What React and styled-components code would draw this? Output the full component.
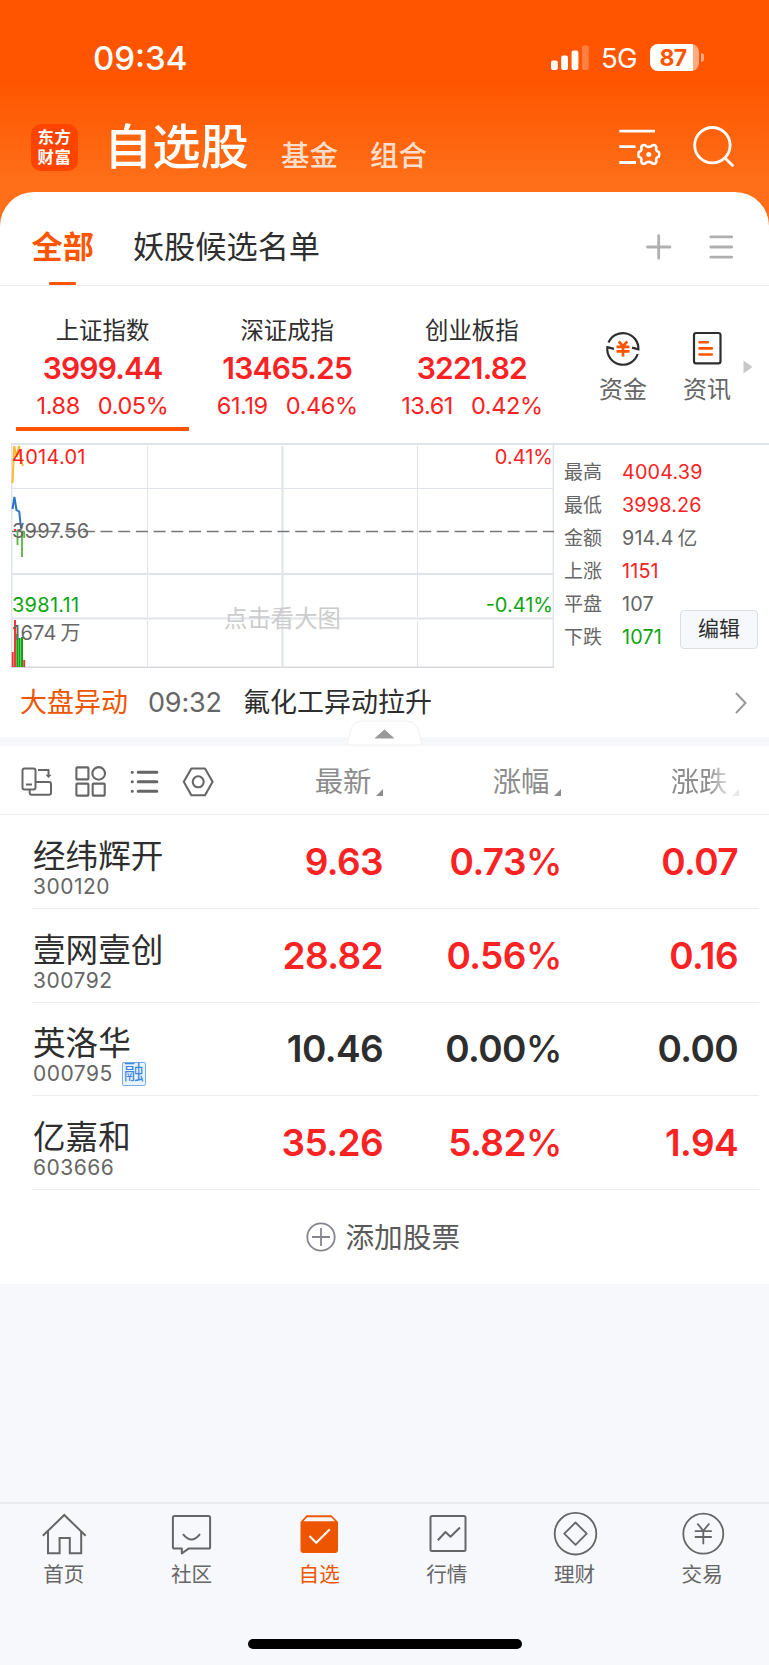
import React, { useState } from "react";
import styled, { createGlobalStyle, css } from "styled-components";

const colors = {
  brand: "#ff5500",
  tab: "#ee5500",
  up: "#fa2222",
  down: "#10a510",
  text: "#2e2e2e",
  sub: "#666666",
  muted: "#8c8c8c",
  line: "#ececee",
  chartLine: "#dfe3ec",
  bg: "#f7f8fb",
};

const GlobalStyle = createGlobalStyle`
  * {
    box-sizing: border-box;
  }
  body {
    margin: 0;
    background: ${colors.bg};
    font-family: Inter, "Noto Sans CJK SC", sans-serif;
    color: ${colors.text};
  }
  button {
    font: inherit;
    color: inherit;
    background: none;
    border: 0;
    padding: 0;
  }
  svg {
    display: block;
    flex: none;
    overflow: visible;
  }
`;

const Screen = styled.div`
  display: flex;
  flex-direction: column;
  width: 769px;
  height: 1665px;
  overflow: hidden;
  white-space: nowrap;
`;

/* ---------- header ---------- */

const Header = styled.header`
  flex: none;
  height: 230px;
  background: linear-gradient(#ff5500 0, #ff5500 82px, #ff6e18 180px);
  color: #fff;
`;

const StatusBar = styled.div`
  display: flex;
  align-items: center;
  height: 115px;
  padding: 0 65px 0 93px;
`;

const Clock = styled.span`
  flex: 1;
  font-size: 33px;
  font-weight: 500;
  line-height: 40px;
`;

const Network = styled.span`
  margin: 0 13px 0 12px;
  font-size: 27.5px;
  line-height: 32px;
  letter-spacing: -0.6px;
  padding-top: 1px;
`;

const Battery = styled.span`
  display: flex;
  align-items: center;
  gap: 2px;

  &::after {
    content: "";
    width: 3px;
    height: 9px;
    border-radius: 0 3px 3px 0;
    background: rgba(255, 255, 255, 0.5);
  }
`;

const BatteryBody = styled.span`
  width: 49px;
  height: 27px;
  border-radius: 8px;
  background: linear-gradient(90deg, #fff 42.5px, rgba(255, 255, 255, 0.5) 42.5px);
  color: ${colors.brand};
  font-size: 23px;
  font-weight: 700;
  line-height: 28px;
  letter-spacing: -0.7px;
  padding-left: 9.5px;
`;

const TitleBar = styled.div`
  display: flex;
  align-items: center;
  height: 64px;
  padding: 0 34px 0 31px;
`;

const AppLogo = styled.div`
  display: flex;
  flex-direction: column;
  align-items: center;
  justify-content: center;
  width: 47px;
  height: 47px;
  margin-right: 26px;
  border-radius: 10px;
  background: #ff4400;
  font-size: 16.4px;
  font-weight: 700;
  line-height: 20px;
  letter-spacing: 0.6px;
`;

const PageTitle = styled.h1`
  margin: 0 32px 0 0;
  font-size: 48.3px;
  font-weight: 500;
  line-height: 56px;
`;

const HeaderLink = styled.span`
  margin-right: 32px;
  padding-top: 18px;
  font-size: 28.5px;
  line-height: 34px;
  font-weight: 500;
  color: rgba(255, 255, 255, 0.8);
`;

const HeaderIcons = styled.div`
  display: flex;
  gap: 32px;
  margin-left: auto;
`;

/* ---------- group tabs ---------- */

const Sheet = styled.main`
  flex: none;
  height: 1092px;
  margin-top: -38px;
  border-radius: 34px 34px 0 0;
  background: #fff;
  overflow: hidden;
`;

const GroupTabs = styled.div`
  display: flex;
  align-items: stretch;
  height: 94px;
  padding: 0 34px 0 31.5px;
  border-bottom: 1px solid ${colors.line};
`;

const GroupTab = styled.button`
  display: flex;
  flex-direction: column;
  align-items: center;
  justify-content: space-between;
  margin-right: 39px;
  padding-top: 35px;
  font-size: 31.2px;
  line-height: 40px;

  ${({ $active }) =>
    $active &&
    css`
      color: ${colors.brand};
      font-weight: 700;

      &::after {
        content: "";
        width: 27px;
        height: 3.5px;
        border-radius: 1px;
        background: ${colors.brand};
      }
    `}
`;

const GroupActions = styled.div`
  display: flex;
  gap: 37px;
  margin-left: auto;
  padding-top: 42px;
`;

/* ---------- indices ---------- */

const IndexRow = styled.section`
  display: flex;
  height: 156.5px;
  padding-left: 16px;
`;

const IndexCard = styled.div`
  display: flex;
  flex-direction: column;
  align-items: center;
  width: 173px;
  height: 144.5px;
  margin-right: 11.7px;
  padding-top: 29px;
  border-bottom: 4px solid
    ${({ $active }) => ($active ? colors.brand : "transparent")};
`;

const IndexName = styled.span`
  font-size: 23.4px;
  line-height: 32px;
`;

const IndexValue = styled.span`
  margin-top: 4px;
  font-size: 30px;
  font-weight: 600;
  line-height: 34px;
  letter-spacing: -0.8px;
  color: ${colors.up};
`;

const IndexChange = styled.span`
  display: flex;
  gap: 18px;
  margin-top: 5px;
  font-size: 23.5px;
  line-height: 32px;
  letter-spacing: -0.4px;
  color: ${colors.up};
`;

const Shortcuts = styled.div`
  display: flex;
  gap: 36px;
  margin-left: 29px;
  padding-top: 44px;
`;

const Shortcut = styled.div`
  display: flex;
  flex-direction: column;
  align-items: center;
  gap: 7px;
  font-size: 24px;
  line-height: 34px;
  color: ${colors.sub};
`;

const MoreArrow = styled.div`
  margin: 74px 0 0 12px;
`;

/* ---------- minute chart ---------- */

const ChartRow = styled.section`
  display: flex;
  height: 225.5px;
  margin-left: 11px;
`;

const ChartBox = styled.div`
  position: relative;
  width: 543px;
`;

const ChartLabel = styled.span`
  position: absolute;
  top: ${({ $top }) => $top}px;
  ${({ $right }) => ($right ? "right: 1px" : "left: 1px")};
  font-size: 20px;
  line-height: 24px;
  letter-spacing: ${({ $right }) => ($right ? 0 : 0.25)}px;
  color: ${({ $color }) => $color};
`;

const ChartHint = styled.span`
  position: absolute;
  top: 160px;
  left: 213px;
  font-size: 23.4px;
  line-height: 32px;
  color: #cccccc;
`;

const QuotePanel = styled.div`
  position: relative;
  flex: 1;
  padding: 11px 0 0 10px;
  border-top: 2px solid ${colors.chartLine};
`;

const QuoteRow = styled.div`
  display: grid;
  grid-template-columns: 58px 1fr;
  height: 33.1px;
  font-size: 19px;
  line-height: 33px;
  color: ${colors.sub};
`;

const QuoteValue = styled.span`
  font-size: 19.8px;
  letter-spacing: 0.15px;
  color: ${({ $color }) => $color};
`;

const EditButton = styled.button`
  position: absolute;
  right: 11px;
  top: 165px;
  width: 78px;
  height: 39px;
  border: 1px solid #dcdfe6;
  border-radius: 4px;
  background: #f7f8fb;
  font-size: 21px;
  line-height: 36px;
`;

const News = styled.div`
  display: flex;
  align-items: center;
  height: 69px;
  padding: 0 22px 0 20px;
  font-size: 27px;
  line-height: 36px;
`;

const NewsTag = styled.span`
  width: 128px;
  color: ${colors.tab};
`;

const NewsTime = styled.span`
  width: 95px;
  letter-spacing: -0.2px;
  color: ${colors.sub};
`;

const NewsTitle = styled.span`
  flex: 1;
`;

const Divider = styled.div`
  position: relative;
  height: 9px;
  background: ${colors.bg};
`;

const Handle = styled.svg`
  position: absolute;
  left: 345.5px;
  top: -17px;
`;

/* ---------- stock list ---------- */

const ListHead = styled.div`
  display: grid;
  grid-template-columns: 383px 178px 178px;
  align-items: center;
  height: 69px;
  padding-top: 3px;
  border-bottom: 1px solid ${colors.line};
`;

const ToolsCell = styled.div`
  display: flex;
  align-items: center;
  justify-content: space-between;
  padding-left: 21px;
`;

const Tools = styled.div`
  display: flex;
  gap: 22px;
  color: ${colors.sub};
`;

const SortLabel = styled.span`
  display: flex;
  align-items: flex-end;
  justify-content: flex-end;
  gap: 4.5px;
  font-size: 28.4px;
  line-height: 36px;
  color: ${colors.muted};

  &::after {
    content: "";
    margin-bottom: 4px;
    border-left: 7px solid transparent;
    border-bottom: 7px solid ${colors.muted};
  }

  ${({ $faded }) =>
    $faded &&
    css`
      mask-image: linear-gradient(90deg, #000 calc(100% - 32px), rgba(0, 0, 0, 0.2) calc(100% - 8px));
    `}
`;

const StockRow = styled.div`
  display: grid;
  grid-template-columns: 351px 179px 176px;
  align-items: center;
  height: 93.75px;
  margin: 0 10px 0 32px;
  border-bottom: 1px solid ${colors.line};
`;

const StockMain = styled.div`
  display: grid;
  grid-template-columns: 1fr auto;
  align-items: center;
`;

const StockInfo = styled.div`
  padding: 15px 0 0 1px;
`;

const StockName = styled.div`
  font-size: 32.6px;
  line-height: 36px;
`;

const StockCode = styled.div`
  display: flex;
  align-items: center;
  gap: 9px;
  height: 26px;
  font-size: 21px;
  line-height: 26px;
  letter-spacing: 0.5px;
  color: ${colors.sub};
`;

const MarginTag = styled.span`
  width: 24px;
  height: 24px;
  border: 1px solid #78aee8;
  border-radius: 2px;
  background: #e9f3fe;
  color: #3a86dc;
  font-size: 20px;
  line-height: 21px;
  letter-spacing: 0;
  text-align: center;
`;

const Figure = styled.span`
  padding-top: 1px;
  font-size: 37px;
  font-weight: 600;
  line-height: 44px;
  letter-spacing: -0.6px;
  text-align: right;
  color: ${({ $flat }) => ($flat ? colors.text : colors.up)};
`;

const Percent = styled.span`
  font-weight: 500;
`;

const AddStock = styled.button`
  display: flex;
  align-items: center;
  justify-content: center;
  gap: 9.5px;
  width: 100%;
  height: 95px;
  padding-right: 3px;
  font-size: 28.7px;
  line-height: 40px;
  color: #5a5a5a;
`;

/* ---------- bottom bar ---------- */

const TabBar = styled.nav`
  display: grid;
  grid-template-columns: repeat(6, 1fr);
  height: 163px;
  margin-top: auto;
  padding: 8px 3px 0 0;
  border-top: 2px solid #e9eaed;
  position: relative;
`;

const TabItem = styled.button`
  display: flex;
  flex-direction: column;
  align-items: center;
  justify-content: flex-start;
  gap: 5px;
  font-size: 20.6px;
  line-height: 28px;
  color: ${({ $active }) => ($active ? colors.tab : colors.sub)};
`;

const HomeIndicator = styled.div`
  position: absolute;
  left: 247.5px;
  bottom: 16px;
  width: 274px;
  height: 10px;
  border-radius: 5px;
  background: #000;
`;

/* ---------- icons ---------- */

const Svg = ({ w, h = w, sw = 2, children, ...rest }) => (
  <svg
    width={w}
    height={h}
    viewBox={`0 0 ${w} ${h}`}
    fill="none"
    stroke="currentColor"
    strokeWidth={sw}
    {...rest}
  >
    {children}
  </svg>
);

const SignalIcon = () => (
  <Svg w={38} h={26} stroke="none" fill="#fff">
    <rect x="0" y="15.5" width="6.8" height="9.5" rx="2" />
    <rect x="10.2" y="10.5" width="6.8" height="14.5" rx="2" />
    <rect x="20.6" y="5.5" width="6.8" height="19.5" rx="2" />
    <rect x="31" y="0.5" width="6.8" height="24.5" rx="2" opacity="0.25" />
  </Svg>
);

const FilterIcon = () => (
  <Svg w={42} sw={2.8}>
    <path d="M0.3 5.2H36M0.3 20.7H16.5M0.3 36.5H17" />
    <path
      strokeWidth="2.6"
      strokeLinejoin="round"
      d="M23.6 19.2Q26.2 18.4 27.4 20.4Q29.8 21.4 32.2 20.4Q33.4 18.4 36 19.2Q38 20.6 37 23.4Q37.4 25.4 39.8 26Q41 28.4 39.8 30.8Q37.4 31.400 37 33.400Q38 36.200 36 37.600Q33.400 38.400 32.200 36.400Q29.800 35.400 27.400 36.400Q26.200 38.400 23.600 37.600Q21.600 36.200 22.600 33.400Q22.200 31.400 19.800 30.800Q18.600 28.400 19.800 26Q22.200 25.400 22.600 23.400Q21.600 20.600 23.600 19.200z"
    />
    <circle cx="29.8" cy="28.4" r="2.5" fill="currentColor" stroke="none" />
  </Svg>
);

const SearchIcon = () => (
  <Svg w={42} sw={2.8}>
    <circle cx="19.4" cy="19.2" r="17.7" />
    <path d="M31.5 31.5L40.3 40.3" />
  </Svg>
);

const PlusIcon = () => (
  <Svg w={26} sw={2.8} stroke="#b0b0b0" strokeLinecap="round">
    <path d="M12.700 1.700V24.300M1.500 13H24" />
  </Svg>
);

const MenuIcon = () => (
  <Svg w={26} sw={2.8} stroke="#b0b0b0" strokeLinecap="round">
    <path d="M1.800 2.9H22.700M1.800 13H22.700M1.800 23.2H22.700" />
  </Svg>
);

const FundIcon = () => (
  <Svg w={36} sw={2.2} stroke="#2e2e2e">
    <path d="M3.5 12.5A15.6 15.6 0 0 1 33.4 19.4L27 17.6" />
    <path d="M32.7 24A15.6 15.6 0 0 1 2.4 17.2L9 18.9" />
    <path
      stroke={colors.brand}
      strokeWidth="2.7"
      d="M13.8 11.5L18 16.2L22.2 11.5M11.5 16.8H24.500M11.5 21.3H24.500M18 16V26.500"
    />
  </Svg>
);

const InfoIcon = () => (
  <Svg w={36} sw={2.2} stroke="#2e2e2e">
    <rect x="5" y="3" width="26.500" height="30.400" rx="2.2" />
    <path
      stroke={colors.brand}
      strokeWidth="2.6"
      strokeLinecap="round"
      d="M10.500 12.300H18.800M10.500 18.400H22.800M10.500 24.500H22.800"
    />
  </Svg>
);

const RotateIcon = () => (
  <Svg w={32} sw={2} strokeLinejoin="round">
    <rect x="1.500" y="2.500" width="13" height="21" rx="2" />
    <path d="M5 18.600H11M8.700 24V26.800q0 2 2 2H28q2 0 2-2V18q0-2-2-2H15M17 4H27.500V10" />
    <path d="M24.500 8.800H30.500L27.500 12z" fill="currentColor" stroke="none" />
  </Svg>
);

const GridIcon = () => (
  <Svg w={32} sw={2.1}>
    <rect x="1.400" y="1.400" width="12" height="12" rx="0.800" />
    <circle cx="23.700" cy="7.400" r="6.300" />
    <rect x="1.400" y="17.600" width="12" height="12" rx="0.800" />
    <rect x="17.700" y="17.600" width="12" height="12" rx="0.800" />
  </Svg>
);

const ListIcon = () => (
  <Svg w={32} sw={3} strokeLinecap="round">
    <path d="M9.200 6.300H27.800M9.200 15.800H27.800M9.200 25.300H27.800" />
    <path d="M3.200 6.300h.1M3.200 15.800h.1M3.200 25.300h.1" />
  </Svg>
);

const HexIcon = () => (
  <Svg w={32} sw={2.1} strokeLinejoin="round">
    <path d="M8.400 2.500H22L29.600 15.800L22 29.200H8.400L0.800 15.800z" />
    <circle cx="15.200" cy="15.800" r="5.500" />
  </Svg>
);

const AddIcon = () => (
  <Svg w={30} sw={1.8} stroke="#85858f">
    <circle cx="15" cy="14" r="13.700" />
    <path d="M15 5V23M6 14H24" />
  </Svg>
);

const HomeIcon = () => (
  <Svg w={44} sw={2}>
    <path d="M0.800 23.800L22.300 3L43.600 23.800" />
    <path d="M6 19V41.300H17.600V26H27.800V41.300H39.200V19" />
  </Svg>
);

const CommunityIcon = () => (
  <Svg w={44} sw={2} strokeLinejoin="round">
    <path d="M5.500 4H39.500q1.600 0 1.600 1.600V35q0 1.600-1.600 1.600H19.500L12.800 41.500V36.600H5.500q-1.600 0-1.600-1.600V5.600q0-1.600 1.600-1.600z" />
    <path d="M14 22.200Q22.500 33 31 22.200" />
  </Svg>
);

const FavoriteIcon = () => (
  <Svg w={44} stroke="none">
    <path
      fill="currentColor"
      fillRule="evenodd"
      d="M9.500 3.300H34.500L41 10V38q0 3-3 3H6.500q-3 0-3-3V10zM10 5.300L6.500 9.300H38L34.300 5.300z"
    />
    <path d="M12.500 24L19.200 30.800L32.800 17.300" stroke="#fff" strokeWidth="2" />
  </Svg>
);

const MarketIcon = () => (
  <Svg w={44} sw={2} strokeLinejoin="round">
    <rect x="5.500" y="4" width="35" height="35" rx="1.500" />
    <path d="M12.800 28.300L20.500 20L25.500 24.800L35 15.500" />
  </Svg>
);

const WealthIcon = () => (
  <Svg w={44} sw={1.8} strokeLinejoin="round">
    <circle cx="23.500" cy="21.700" r="20.800" />
    <path d="M23.500 10.500L34.700 21.700L23.500 32.900L12.300 21.700z" />
  </Svg>
);

const TradeIcon = () => (
  <Svg w={44} sw={1.8}>
    <circle cx="23.300" cy="21.700" r="20" />
    <path d="M17.300 11.500L23.300 18.800L29.300 11.500M14.800 19.200H31.800M14.800 25H31.800M23.300 18.500V32.300" />
  </Svg>
);

const MinuteChart = () => (
  <svg width="543" height="225" viewBox="0 0 543 225" fill="none">
    <g stroke={colors.chartLine}>
      <path strokeWidth="2" d="M0 1H543" />
      <path strokeWidth="1.500" d="M0.700 0V225M542.300 0V225" />
      <path stroke="#d6d8de" strokeWidth="1.500" d="M0 224.300H543" />
      <path d="M0 45.500H543M136.500 3V174M136.500 178V224M406.500 3V174M406.500 178V224" />
      <path strokeWidth="2" d="M0 131H543M0 175.500H543M271.500 3V224" />
    </g>
    <path d="M1 88.500H543" stroke="#777" strokeWidth="1.400" strokeDasharray="12 5.700" />
    <path
      d="M1.500 40L3.200 3L5.800 14L8 3L10 17L12 23"
      stroke="#fdb92e"
      strokeWidth="2"
    />
    <path
      d="M1.500 66L3.400 54L5.500 67L8.200 68.500L10 85L12 80"
      stroke="#2a74c8"
      strokeWidth="2"
    />
    <path d="M6.500 88V102M11 88V114M13.200 88V95" stroke="#58b440" strokeWidth="1.800" />
    <path d="M4 86V88M1.700 209V224M4 177V224M13.200 217V224" stroke="#f03030" strokeWidth="1.900" />
    <path d="M6.300 191V224M8.600 195V224M11 194V224" stroke="#10a510" strokeWidth="2" />
  </svg>
);

/* ---------- data ---------- */

const indices = [
  { name: "上证指数", value: "3999.44", diff: "1.88", pct: "0.05%" },
  { name: "深证成指", value: "13465.25", diff: "61.19", pct: "0.46%" },
  { name: "创业板指", value: "3221.82", diff: "13.61", pct: "0.42%" },
];

const quotes = [
  { label: "最高", value: "4004.39", color: colors.up },
  { label: "最低", value: "3998.26", color: colors.up },
  { label: "金额", value: "914.4\u2009亿", color: colors.sub },
  { label: "上涨", value: "1151", color: colors.up },
  { label: "平盘", value: "107", color: colors.sub },
  { label: "下跌", value: "1071", color: colors.down },
];

const stocks = [
  { name: "经纬辉开", code: "300120", price: "9.63", pct: "0.73", diff: "0.07" },
  { name: "壹网壹创", code: "300792", price: "28.82", pct: "0.56", diff: "0.16" },
  { name: "英洛华", code: "000795", price: "10.46", pct: "0.00", diff: "0.00", flat: true, margin: true },
  { name: "亿嘉和", code: "603666", price: "35.26", pct: "5.82", diff: "1.94" },
];

const tabs = [
  { label: "首页", Icon: HomeIcon },
  { label: "社区", Icon: CommunityIcon },
  { label: "自选", Icon: FavoriteIcon },
  { label: "行情", Icon: MarketIcon },
  { label: "理财", Icon: WealthIcon },
  { label: "交易", Icon: TradeIcon },
];

export default function App() {
  const [group, setGroup] = useState("全部");
  const [index, setIndex] = useState("上证指数");
  const [tab, setTab] = useState("自选");

  return (
    <Screen>
      <GlobalStyle />
      <Header>
        <StatusBar>
          <Clock>09:34</Clock>
          <SignalIcon />
          <Network>5G</Network>
          <Battery>
            <BatteryBody>87</BatteryBody>
          </Battery>
        </StatusBar>
        <TitleBar>
          <AppLogo>
            <span>东方</span>
            <span>财富</span>
          </AppLogo>
          <PageTitle>自选股</PageTitle>
          <HeaderLink>基金</HeaderLink>
          <HeaderLink>组合</HeaderLink>
          <HeaderIcons>
            <FilterIcon />
            <SearchIcon />
          </HeaderIcons>
        </TitleBar>
      </Header>

      <Sheet>
        <GroupTabs>
          {["全部", "妖股候选名单"].map((name) => (
            <GroupTab key={name} $active={group === name} onClick={() => setGroup(name)}>
              {name}
            </GroupTab>
          ))}
          <GroupActions>
            <PlusIcon />
            <MenuIcon />
          </GroupActions>
        </GroupTabs>

        <IndexRow>
          {indices.map(({ name, value, diff, pct }) => (
            <IndexCard key={name} $active={index === name} onClick={() => setIndex(name)}>
              <IndexName>{name}</IndexName>
              <IndexValue>{value}</IndexValue>
              <IndexChange>
                <span>{diff}</span>
                <span>{pct}</span>
              </IndexChange>
            </IndexCard>
          ))}
          <Shortcuts>
            <Shortcut>
              <FundIcon />
              资金
            </Shortcut>
            <Shortcut>
              <InfoIcon />
              资讯
            </Shortcut>
          </Shortcuts>
          <MoreArrow>
            <svg width="10" height="14" viewBox="0 0 10 14">
              <path d="M0.500 0.500L9.500 7L0.500 13.500z" fill="#c8c8c8" />
            </svg>
          </MoreArrow>
        </IndexRow>

        <ChartRow>
          <ChartBox>
            <MinuteChart />
            <ChartLabel $top={2} $color={colors.up}>4014.01</ChartLabel>
            <ChartLabel $top={2} $color={colors.up} $right>0.41%</ChartLabel>
            <ChartLabel $top={76} $color={colors.sub}>3997.56</ChartLabel>
            <ChartLabel $top={150} $color={colors.down}>3981.11</ChartLabel>
            <ChartLabel $top={150} $color={colors.down} $right>-0.41%</ChartLabel>
            <ChartLabel $top={178} $color={colors.sub}>{"1674\u2009万"}</ChartLabel>
            <ChartHint>点击看大图</ChartHint>
          </ChartBox>
          <QuotePanel>
            {quotes.map(({ label, value, color }) => (
              <QuoteRow key={label}>
                {label}
                <QuoteValue $color={color}>{value}</QuoteValue>
              </QuoteRow>
            ))}
            <EditButton>编辑</EditButton>
          </QuotePanel>
        </ChartRow>

        <News>
          <NewsTag>大盘异动</NewsTag>
          <NewsTime>09:32</NewsTime>
          <NewsTitle>氟化工异动拉升</NewsTitle>
          <Svg w={12} h={22} stroke="#999">
            <path d="M1 1L10.500 11L1 21" />
          </Svg>
        </News>

        <Divider>
          <Handle width="77" height="26" viewBox="0 0 77 26">
            <path
              d="M1 25L4.500 11Q7 1 17 1H60Q70 1 72.500 11L76 25z"
              fill="#fff"
              stroke="#f0f0f3"
            />
            <path
              d="M29.500 18L38.500 10L47.500 18z"
              fill="#999"
              stroke="#999"
              strokeLinejoin="round"
            />
          </Handle>
        </Divider>

        <ListHead>
          <ToolsCell>
            <Tools>
              <RotateIcon />
              <GridIcon />
              <ListIcon />
              <HexIcon />
            </Tools>
            <SortLabel>最新</SortLabel>
          </ToolsCell>
          <SortLabel>涨幅</SortLabel>
          <SortLabel $faded>涨跌</SortLabel>
        </ListHead>

        {stocks.map(({ name, code, price, pct, diff, flat, margin }) => (
          <StockRow key={code}>
            <StockMain>
              <StockInfo>
                <StockName>{name}</StockName>
                <StockCode>
                  {code}
                  {margin && <MarginTag>融</MarginTag>}
                </StockCode>
              </StockInfo>
              <Figure $flat={flat}>{price}</Figure>
            </StockMain>
            <Figure $flat={flat}>
              {pct}
              <Percent>%</Percent>
            </Figure>
            <Figure $flat={flat}>{diff}</Figure>
          </StockRow>
        ))}

        <AddStock>
          <AddIcon />
          添加股票
        </AddStock>
      </Sheet>

      <TabBar>
        {tabs.map(({ label, Icon }) => (
          <TabItem key={label} $active={tab === label} onClick={() => setTab(label)}>
            <Icon />
            {label}
          </TabItem>
        ))}
        <HomeIndicator />
      </TabBar>
    </Screen>
  );
}
